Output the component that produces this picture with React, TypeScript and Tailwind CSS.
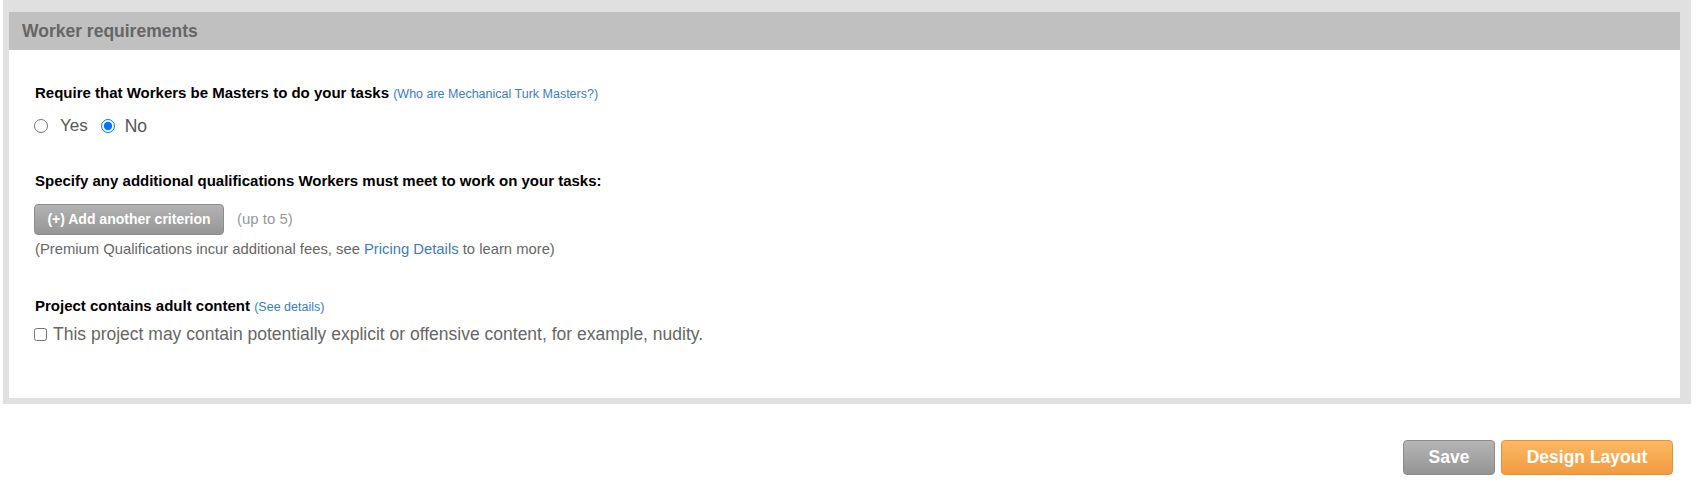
import React from "react";

const font = { fontFamily: '"Liberation Sans", Arial, sans-serif' };

export default function App() {
  return (
    <div className="w-[1698px] h-[493px] bg-white" style={font}>
      {/* Worker requirements panel */}
      <div className="ml-[3px] w-[1688px] bg-[#e0e0e0] pt-[12px] pl-[6px] pr-[11px] pb-[6px]">
        <div className="h-[38px] bg-[#c0c0c0] flex items-center pl-[13px]">
          <h2 className="text-[17.5px] font-bold text-[#666666]">Worker requirements</h2>
        </div>
        <div className="bg-white pl-[26px] pt-[34px] pb-[54px]">
          <div className="h-[18px] leading-[18px] text-[15px] font-bold text-black">
            Require that Workers be Masters to do your tasks{" "}
            <a className="font-normal text-[12.5px] text-[#3a7cc6]">(Who are Mechanical Turk Masters?)</a>
          </div>
          <div className="mt-[14px] h-[20px] flex items-center text-[17px] text-[#555555]">
            <input type="radio" name="masters" className="m-0 ml-[-1px] w-[14px] h-[14px]" readOnly />
            <span className="ml-[12px]">Yes</span>
            <input type="radio" name="masters" defaultChecked className="m-0 ml-[13px] w-[14px] h-[14px]" />
            <span className="ml-[10px] text-[17.5px]">No</span>
          </div>

          <div className="mt-[36px] h-[18px] leading-[18px] text-[15px] font-bold text-black">
            Specify any additional qualifications Workers must meet to work on your tasks:
          </div>
          <div className="mt-[14px] flex items-center">
            <button className="ml-[-1px] h-[31px] w-[190px] rounded-[4px] border border-[#8c8c8c] bg-gradient-to-b from-[#b3b3b3] to-[#969696] text-[14px] font-bold text-white">
              (+) Add another criterion
            </button>
            <span className="ml-[13px] text-[15px] text-[#999999]">(up to 5)</span>
          </div>
          <div className="mt-[5px] h-[18px] leading-[18px] text-[14.8px] text-[#666666]">
            (Premium Qualifications incur additional fees, see{" "}
            <a className="text-[#3a7cc6]">Pricing Details</a> to learn more)
          </div>

          <div className="mt-[39px] h-[18px] leading-[18px] text-[15px] font-bold text-black">
            Project contains adult content{" "}
            <a className="font-normal text-[12.5px] text-[#3a7cc6]">(See details)</a>
          </div>
          <label className="mt-[9px] h-[20px] flex items-center text-[17.5px] text-[#666666]">
            <input type="checkbox" className="m-0 ml-[-1px] w-[13px] h-[13px]" />
            <span className="ml-[6px]">
              This project may contain potentially explicit or offensive content, for example, nudity.
            </span>
          </label>
        </div>
      </div>

      {/* actions */}
      <div className="mt-[36px] flex justify-end gap-[6px] pr-[25px]">
        <button className="h-[35px] w-[92px] rounded-[4px] border border-[#8c8c8c] bg-gradient-to-b from-[#b5b5b5] to-[#949494] text-[17.5px] font-bold text-white">
          Save
        </button>
        <button className="h-[35px] w-[172px] rounded-[4px] border border-[#e5913a] bg-gradient-to-b from-[#fbb862] to-[#f29b40] text-[17.5px] font-bold text-white">
          Design Layout
        </button>
      </div>
    </div>
  );
}
